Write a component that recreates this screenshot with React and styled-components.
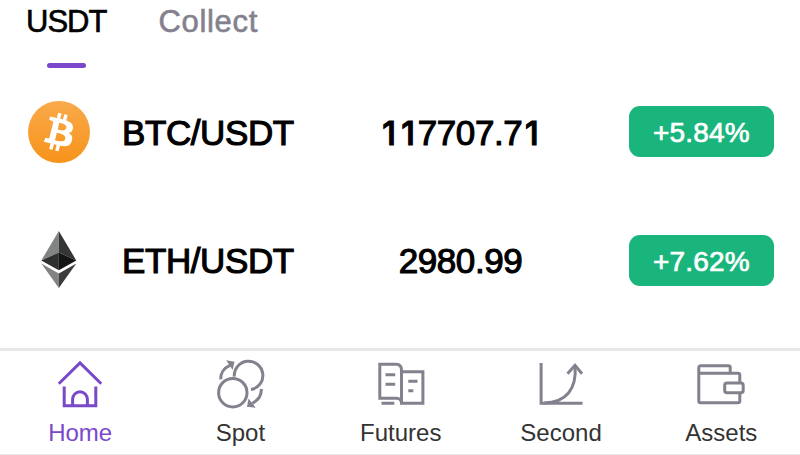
import React from "react";
import styled, { createGlobalStyle } from "styled-components";

const GlobalStyle = createGlobalStyle`
  * {
    box-sizing: border-box;
  }

  body {
    margin: 0;
    background: #fff;
    overflow: hidden;
    font-family: "Liberation Sans", Arial, sans-serif;
  }
`;

const pairs = [
  { id: "btc", name: "BTC/USDT", price: "117707.71", change: "+5.84%" },
  { id: "eth", name: "ETH/USDT", price: "2980.99", change: "+7.62%" },
];

const BtcLogo = () => (
  <CoinLogo viewBox="0 0 32 32">
    <defs>
      <linearGradient id="btcFill" x1="0" y1="0" x2="0" y2="1">
        <stop offset="0" stopColor="#f9aa4b" />
        <stop offset="1" stopColor="#f7931a" />
      </linearGradient>
    </defs>
    <circle cx="16" cy="16" r="16" fill="url(#btcFill)" />
    <path
      fill="#fff"
      d="M23.189 14.02c.314-2.096-1.283-3.223-3.465-3.975l.708-2.84-1.728-.43-.69 2.765c-.454-.114-.92-.22-1.385-.326l.695-2.783L15.596 6l-.708 2.839c-.376-.086-.746-.17-1.104-.26l.002-.009-2.384-.595-.46 1.846s1.283.294 1.256.312c.7.175.826.638.805 1.006l-.806 3.235c.048.012.11.03.18.057l-.183-.045-1.13 4.532c-.086.212-.303.531-.793.41.018.025-1.256-.313-1.256-.313l-.858 1.978 2.25.561c.418.105.828.215 1.231.318l-.715 2.872 1.727.43.708-2.84c.472.127.93.245 1.378.357l-.706 2.828 1.728.43.715-2.866c2.948.558 5.164.333 6.097-2.333.752-2.146-.037-3.385-1.588-4.192 1.13-.26 1.98-1.003 2.207-2.538zm-3.95 5.538c-.533 2.147-4.148.986-5.32.695l.95-3.805c1.172.293 4.929.872 4.37 3.11zm.535-5.569c-.487 1.953-3.495.96-4.47.717l.86-3.45c.975.243 4.118.696 3.61 2.733z"
    />
  </CoinLogo>
);

const EthLogo = () => (
  <CoinLogo viewBox="0 0 62 62">
    <path fill="#828384" d="M30.8 2L13.3 31.5l17.5-8z" />
    <path fill="#343535" d="M30.8 2l17.5 29.5-17.5-8z" />
    <path fill="#2f3030" d="M13.3 31.5l17.5-8v17.8z" />
    <path fill="#131414" d="M48.3 31.5l-17.5-8v17.8z" />
    <path fill="#828384" d="M13.3 34.6l17.5 10V59z" />
    <path fill="#3c3c3b" d="M48.3 34.6l-17.5 10V59z" />
  </CoinLogo>
);

const logos = { btc: BtcLogo, eth: EthLogo };

const HomeIcon = () => (
  <NavIcon viewBox="0 0 52 52">
    <path d="M4.8 25.7L26 4.9l21.2 20.8" />
    <path d="M10.2 28.6v19.2h31.6V28.6" />
    <path d="M18.6 47.8v-6.6a7.4 7.4 0 0 1 14.8 0v6.6" />
  </NavIcon>
);

const SpotIcon = () => (
  <NavIcon viewBox="0 0 52 52">
    <circle cx="18.8" cy="34.7" r="14.2" />
    <path d="M20.3 18.6a14.3 14.3 0 1 1 16.7 13" />
    <path d="M6.7 21.4c-.2-6 3.3-11.5 9.3-14" />
    <path d="M47.3 31c.2 6-3 11.3-9 14.3" />
    <path className="solid" d="M12.2 2.3l8.300 1.500-1.900 8.200z" />
    <path className="solid" d="M34.500 40.500l-1.500 8.300 8.700 1z" />
  </NavIcon>
);

const FuturesIcon = () => (
  <NavIcon viewBox="0 0 52 52">
    <path d="M26.5 45.3c0-3-2-5-5-5H4.800v-34h16.400c3.300 0 5.300 2.300 5.300 6z" />
    <path d="M26.500 13.700h21.400v31.600H26.500z" />
    <path d="M10.500 16.700h9.700M10.500 26.200h9.700M33.300 23.200h9.200M33.300 32.700h5M6.500 45.300h12.800" />
  </NavIcon>
);

const SecondIcon = () => (
  <NavIcon viewBox="0 0 52 52">
    <path d="M6.100 5v40.300h41.400" />
    <path d="M9 45c22-.5 33-14 31-37" />
    <path d="M32.500 15.700L40 7.300l7 8.400" />
  </NavIcon>
);

const AssetsIcon = () => (
  <NavIcon viewBox="0 0 52 52">
    <path d="M35.200 15.300V9.500c0-1-.8-1.800-1.800-1.800H5.600c-1 0-1.800.8-1.800 1.800v33.400c0 1 .8 1.800 1.800 1.800h37.400c1 0 1.800-.8 1.800-1.800v-8.200M44.800 25v-7.900c0-1-.8-1.800-1.800-1.800H3.800" />
    <rect x="29.700" y="25" width="18.500" height="9.700" rx="2.300" />
  </NavIcon>
);

const navItems = [
  { label: "Home", Icon: HomeIcon, active: true },
  { label: "Spot", Icon: SpotIcon },
  { label: "Futures", Icon: FuturesIcon },
  { label: "Second", Icon: SecondIcon },
  { label: "Assets", Icon: AssetsIcon },
];

const Price = ({ value }) => (
  <PriceText>
    {value
      .split(/(1)/)
      .map((part, i) => (part === "1" ? <One key={i}>{part}</One> : part))}
  </PriceText>
);

const App = () => {
  return (
    <Screen>
      <GlobalStyle />
      <Tabs>
        <Tab $active>USDT</Tab>
        <Tab>Collect</Tab>
      </Tabs>
      <PairList>
        {pairs.map(({ id, name, price, change }) => {
          const Logo = logos[id];
          return (
            <PairRow key={id}>
              <Logo />
              <PairName>{name}</PairName>
              <Price value={price} />
              <Change>{change}</Change>
            </PairRow>
          );
        })}
      </PairList>
      <BottomNav>
        {navItems.map(({ label, Icon, active }) => (
          <NavItem key={label} $active={active}>
            <Icon />
            <span>{label}</span>
          </NavItem>
        ))}
      </BottomNav>
    </Screen>
  );
};

const Screen = styled.div`
  display: flex;
  flex-direction: column;
  width: 800px;
  height: 455px;
  background: #fff;
  overflow: hidden;
`;

const Tabs = styled.div`
  display: flex;
  gap: 52px;
  height: 67.6px;
  padding-left: 26px;
`;

const Tab = styled.div`
  display: flex;
  flex-direction: column;
  justify-content: space-between;
  align-items: center;
  font-size: 31px;
  line-height: 44px;
  letter-spacing: ${({ $active }) => ($active ? "-1px" : "0.7px")};
  color: ${({ $active }) => ($active ? "#000" : "#83818e")};
  -webkit-text-stroke: 0.6px currentColor;

  &::after {
    content: "";
    width: 39px;
    height: 4.4px;
    border-radius: 3px;
    background: ${({ $active }) => ($active ? "#7a48cb" : "transparent")};
  }
`;

const PairList = styled.div`
  flex: 1;
`;

const PairRow = styled.div`
  display: grid;
  grid-template-columns: 94px 220px 1fr 145px;
  align-items: center;
  height: 128.5px;
  padding: 0 26px 0 28px;
`;

const CoinLogo = styled.svg`
  width: 62px;
  height: 62px;
`;

const PairName = styled.div`
  padding-top: 2px;
  font-size: 35px;
  line-height: 42px;
  letter-spacing: -0.4px;
  color: #000;
  -webkit-text-stroke: 1.1px currentColor;
`;

const PriceText = styled.div`
  width: 237px;
  padding-top: 2px;
  font-size: 35px;
  line-height: 42px;
  letter-spacing: -0.4px;
  text-align: center;
  color: #000;
  -webkit-text-stroke: 1.1px currentColor;
`;

const One = styled.span`
  display: inline-block;
  width: 19.1px;
  font-family: Inter, sans-serif;
  font-size: 33px;
  font-weight: 500;
  line-height: 1;
  letter-spacing: 0;
  text-align: center;
`;

const Change = styled.div`
  height: 51px;
  border-radius: 11px;
  background: #1ab57c;
  color: #fff;
  font-size: 28px;
  line-height: 54px;
  letter-spacing: 0.2px;
  text-align: center;
  -webkit-text-stroke: 0.7px currentColor;
`;

const BottomNav = styled.nav`
  display: grid;
  grid-template-columns: repeat(5, 160.3px);
  height: 107px;
  border-top: 3px solid #e7e7e7;
  border-bottom: 1px solid #e9e9e9;
`;

const NavItem = styled.div`
  display: flex;
  flex-direction: column;
  align-items: center;
  padding-top: 7px;
  color: ${({ $active }) => ($active ? "#7a48cb" : "#333")};
  font-size: 24px;
  line-height: 28px;

  svg {
    color: ${({ $active }) => ($active ? "#7a48cb" : "#83818e")};
  }

  span {
    margin-top: 9px;
  }
`;

const NavIcon = styled.svg`
  width: 52px;
  height: 52px;
  fill: none;
  stroke: currentColor;
  stroke-width: 3;

  .solid {
    fill: currentColor;
    stroke: none;
  }
`;

export default App;
